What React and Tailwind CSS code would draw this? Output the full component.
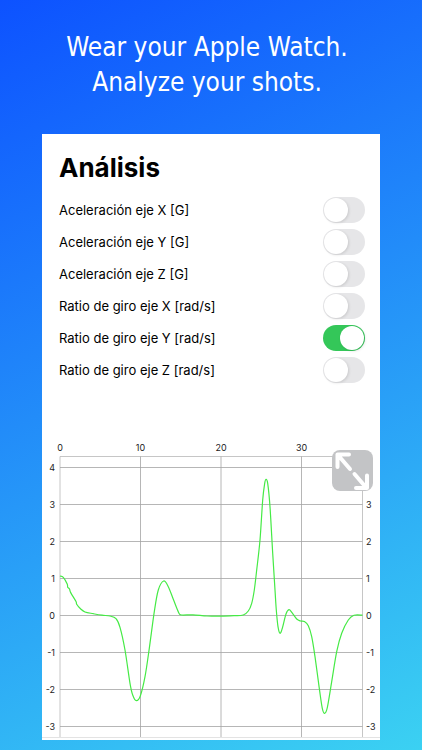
import { useState } from 'react';

const axes = [
    { id: 'acc-x', label: 'Aceleración eje X [G]' },
    { id: 'acc-y', label: 'Aceleración eje Y [G]' },
    { id: 'acc-z', label: 'Aceleración eje Z [G]' },
    { id: 'gyro-x', label: 'Ratio de giro eje X [rad/s]' },
    { id: 'gyro-y', label: 'Ratio de giro eje Y [rad/s]' },
    { id: 'gyro-z', label: 'Ratio de giro eje Z [rad/s]' },
];

const columns = [
    { value: 0, x: 18 },
    { value: 10, x: 98.5 },
    { value: 20, x: 179 },
    { value: 30, x: 259.5 },
];

const levels = [4, 3, 2, 1, 0, -1, -2, -3];

const levelY = (value) => 175.5 - value * 37;

const samples = [
    [18, 136], [21.3, 137.3], [25.2, 144], [25.7, 147.2], [27.5, 149], [28.7, 152.6], [34, 161.5], [34.7, 164.3], [38.5, 168.8],
    [43, 172], [51.3, 173.7], [60, 175.2], [68, 176], [74, 178.7], [78, 187.3], [83, 210], [88, 243.3], [90.7, 255],
    [94.3, 260.7], [98.3, 256], [103, 236.7], [107.3, 208.3], [112.3, 171.7], [116.3, 150], [121.7, 141], [126.3, 146.7],
    [131.3, 159.3], [136.7, 172.7], [139.7, 175], [151, 174.8], [165, 176], [179, 176.2], [192, 175.7], [201.3, 175],
    [206.3, 171], [209.7, 163.3], [212.3, 150], [214.7, 130], [218, 100], [220.7, 60], [222.7, 43.3], [224, 39.3],
    [225.7, 43.3], [228, 66.7], [230.7, 113.3], [233, 150], [234.3, 170], [236, 186.7], [238, 193.3], [240.3, 188.3],
    [244, 174], [247, 169.7], [250, 172.7], [254.7, 179], [258.7, 181], [262.3, 181.5], [266.3, 185.7], [269.7, 196.7],
    [273, 216.7], [277.3, 248.3], [280.3, 268.3], [282.7, 273.3], [285.3, 267.7], [289.7, 241.7], [294.7, 211.7],
    [299.7, 193.3], [306.3, 180], [312, 175.3], [320.5, 175.2],
];

// Catmull-Rom through the samples, written as cubic segments
function toPath(points) {
    let d = `M${points[0][0]} ${points[0][1]}`;
    for (let i = 0; i < points.length - 1; i++) {
        const p0 = points[i - 1] || points[i];
        const p1 = points[i];
        const p2 = points[i + 1];
        const p3 = points[i + 2] || p2;
        d += `C${p1[0] + (p2[0] - p0[0]) / 6} ${p1[1] + (p2[1] - p0[1]) / 6} ${p2[0] - (p3[0] - p1[0]) / 6} ${p2[1] - (p3[1] - p1[1]) / 6} ${p2[0]} ${p2[1]}`;
    }
    return d;
}

function Chart() {
    return (
        <svg viewBox="0 0 338 300" className="block w-full" role="img" aria-label="Ratio de giro eje Y">
            <g stroke="#a3a3a3" strokeWidth="0.8">
                <path d="M18 16.5H320.5" stroke="#b8b8b8" />
                <path d="M18 16.5V297M320.5 16.5V297" stroke="#b8b8b8" />
                {columns.slice(1).map((column) => (
                    <path key={column.value} d={`M${column.x} 16.5V297`} />
                ))}
                {levels.map((value) => (
                    <path key={value} d={`M18 ${levelY(value)}H320.5`} />
                ))}
                <path d="M0 297.5H338" stroke="#dcdcdc" />
            </g>
            <g className="fill-[#222222] font-['Inter',sans-serif] text-[9px]">
                {columns.map((column) => (
                    <text key={column.value} x={column.x} y="11" textAnchor="middle">{column.value}</text>
                ))}
                {levels.map((value) => (
                    <text key={value} x="13" y={levelY(value) + 3} textAnchor="end">{value}</text>
                ))}
                {levels.map((value) => (
                    <text key={value} x="324" y={levelY(value) + 3}>{value}</text>
                ))}
            </g>
            <path d={toPath(samples)} fill="none" stroke="#45ea45" strokeWidth="1.2" />
        </svg>
    );
}

function Switch({ id, label, checked, onChange }) {
    return (
        <div className="flex h-8 items-center justify-between">
            <label htmlFor={id} className="text-[13px] leading-5">{label}</label>
            <input
                id={id}
                type="checkbox"
                role="switch"
                checked={checked}
                onChange={onChange}
                className="flex h-[26px] w-[42px] appearance-none items-center rounded-full bg-[#e6e6e8] px-px before:size-6 before:rounded-full before:bg-white before:shadow-[1px_1px_3px_rgba(0,0,0,0.12)] checked:justify-end checked:bg-[#34c759]"
            />
        </div>
    );
}

function App() {
    const [active, setActive] = useState('gyro-y');

    return (
        <div className="min-h-screen bg-[linear-gradient(155deg,#0d52ff,#3bd1f2)] px-[42px] pt-[30px] pb-[10px]">
            <h1 className="-mx-6 pr-2 text-center font-['DejaVu_Sans_Condensed','Noto_Sans',sans-serif] text-[26px] leading-[35px] text-white">
                Wear your Apple Watch.
                <br />
                Analyze your shots.
            </h1>
            <main className="mt-[34px] bg-white pt-[18px] font-['Inter',sans-serif] text-black">
                <section className="pr-[15px] pl-[17px]">
                    <h2 className="mb-[10px] text-[26px] leading-8 font-bold">Análisis</h2>
                    {axes.map((axis) => (
                        <Switch
                            key={axis.id}
                            id={axis.id}
                            label={axis.label}
                            checked={active === axis.id}
                            onChange={() => setActive(axis.id)}
                        />
                    ))}
                </section>
                <section className="relative mt-[54px]">
                    <Chart />
                    <button type="button" aria-label="Ampliar" className="absolute top-[10px] right-[7px] size-[41px] rounded-lg bg-[#c3c4c6]">
                        <svg viewBox="0 0 41 41" className="size-full" fill="none" stroke="#fff" strokeWidth="4" strokeLinecap="round" strokeLinejoin="round">
                            <path d="M5.500 17V4.500H17M5.500 4.500L18 19M22.500 24L34.500 38M35 25.500V38H24" />
                        </svg>
                    </button>
                </section>
            </main>
        </div>
    );
}

export default App;
